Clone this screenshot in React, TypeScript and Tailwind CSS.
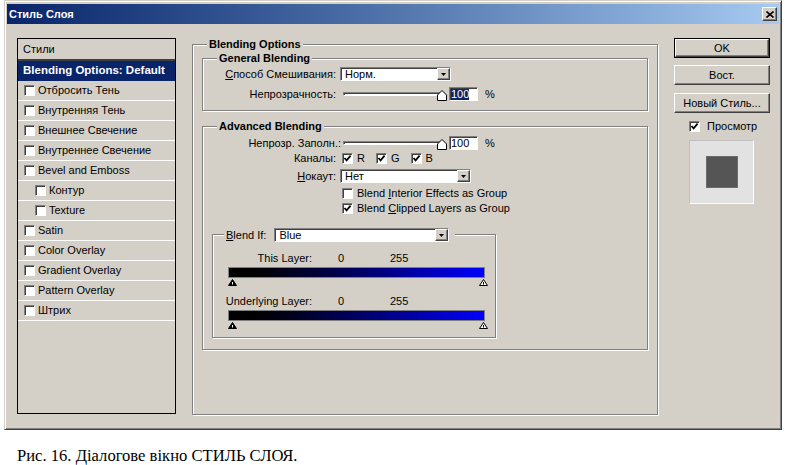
import React from "react";

const sunken =
  "border border-t-[#808080] border-l-[#808080] border-r-white border-b-white shadow-[inset_1px_1px_0_#404040]";
const raised =
  "border border-t-white border-l-white border-r-[#404040] border-b-[#404040] shadow-[inset_-1px_-1px_0_#808080]";
const etched = "border border-[#808080] shadow-[inset_1px_1px_0_#fff,1px_1px_0_#fff]";

const Check = ({ checked = false }: { checked?: boolean }) => (
  <span className={`inline-flex h-[11px] w-[11px] shrink-0 items-center justify-center bg-white ${sunken}`}>
    {checked && (
      <svg width="9" height="9" viewBox="0 0 9 9">
        <path d="M1.5 4 L3.6 6.4 L7.6 1.6" fill="none" stroke="#000" strokeWidth="1.7" />
      </svg>
    )}
  </span>
);

const Select = ({ value, className }: { value: string; className: string }) => (
  <div className={`flex h-[14px] items-stretch bg-white ${sunken} ${className}`}>
    <span className="flex-1 pl-[4px] leading-[12px]">{value}</span>
    <span className={`flex w-[13px] items-center justify-center bg-[#d4d0c8] ${raised}`}>
      <svg width="5" height="3" viewBox="0 0 5 3">
        <path d="M0 0H5L2.5 3Z" fill="#000" />
      </svg>
    </span>
  </div>
);

const Slider = () => (
  <div className="relative flex h-[14px] w-[102px] items-center">
    <div className={`h-[4px] w-full bg-white ${sunken}`} />
    <svg className="absolute right-[-2px] top-[3px]" width="10" height="11" viewBox="0 0 10 11">
      <path d="M5 0.5L9.5 5V10.5H0.5V5Z" fill="#fff" stroke="#000" />
    </svg>
  </div>
);

const Percent = ({ selected = false }: { selected?: boolean }) => (
  <div className="flex items-center gap-[7px]">
    <div className={`flex h-[14px] w-[29px] items-center bg-white pl-[1px] ${sunken}`}>
      <span className={selected ? "bg-[#0a246a] leading-[11px] text-white" : "leading-[11px]"}>100</span>
    </div>
    <span>%</span>
  </div>
);

const Marker = ({ filled }: { filled: boolean }) => (
  <svg width="9" height="7" viewBox="0 0 9 7">
    <path d="M4.5 0.5L8.5 6.5H0.5Z" fill={filled ? "#000" : "#fff"} stroke="#000" />
    <path d="M4.5 3V5.5" stroke={filled ? "#fff" : "#000"} />
  </svg>
);

const LevelBar = () => (
  <>
    <div className="ml-[15px] mt-[2px] h-[11px] w-[257px] border border-[#808080] bg-linear-to-r from-black to-[#0000ff]" />
    <div className="ml-[15px] mt-[1px] flex h-[7px] w-[260px] justify-between">
      <Marker filled />
      <Marker filled={false} />
    </div>
  </>
);

const Group = ({
  title,
  className,
  children,
}: {
  title: string;
  className: string;
  children: React.ReactNode;
}) => (
  <div className={`relative ${etched} ${className}`}>
    <span className="absolute left-[14px] top-[-8px] bg-[#d4d0c8] px-[2px] font-bold leading-[14px]">{title}</span>
    {children}
  </div>
);

const styles: { name: string; sub?: boolean }[] = [
  { name: "Отбросить Тень" },
  { name: "Внутренняя Тень" },
  { name: "Внешнее Свечение" },
  { name: "Внутреннее Свечение" },
  { name: "Bevel and Emboss" },
  { name: "Контур", sub: true },
  { name: "Texture", sub: true },
  { name: "Satin" },
  { name: "Color Overlay" },
  { name: "Gradient Overlay" },
  { name: "Pattern Overlay" },
  { name: "Штрих" },
];

export default function App() {
  return (
    <div className="h-[465px] w-[786px] overflow-hidden bg-white font-['Liberation_Sans',Arial,sans-serif] text-[11px] text-black">
      <div className="ml-[4px] flex h-[430px] w-[778px] flex-col border border-t-[#d4d0c8] border-l-[#d4d0c8] border-r-[#404040] border-b-[#404040] bg-[#d4d0c8] px-[2px] pt-[3px] shadow-[inset_1px_1px_0_#fff,inset_-1px_-1px_0_#808080]">
        {/* title bar */}
        <div className="flex h-[20px] items-center justify-between bg-linear-to-r from-[#0a246a] to-[#a6caf0] pl-[2px] pr-[2px]">
          <span className="font-bold text-white">Стиль Слоя</span>
          <span className={`flex h-[14px] w-[15px] items-center justify-center bg-[#d4d0c8] ${raised}`}>
            <svg width="8" height="7" viewBox="0 0 8 7">
              <path d="M0.5 0.5L7.5 6.5M7.5 0.5L0.5 6.5" stroke="#000" strokeWidth="1.6" />
            </svg>
          </span>
        </div>

        <div className="flex pl-[10px] pt-[14px]">
          {/* styles list */}
          <div className="flex h-[376px] w-[159px] flex-col border border-black">
            <div className="flex h-[20px] items-center pl-[5px]">Стили</div>
            <div className="h-[2px] bg-[#404040]" />
            <div className="flex h-[20px] items-center bg-[#0a246a] pl-[5px] text-[11.5px] font-bold text-white">
              Blending Options: Default
            </div>
            {styles.map((s) => (
              <div
                key={s.name}
                className={`flex h-[20px] items-center gap-[3px] border-b border-white ${s.sub ? "pl-[17px]" : "pl-[6px]"}`}
              >
                <Check />
                <span>{s.name}</span>
              </div>
            ))}
          </div>

          {/* blending options */}
          <Group title="Blending Options" className="ml-[16px] mt-[6px] h-[371px] w-[466px] px-[9px] pt-[13px]">
            <Group title="General Blending" className="h-[53px] w-[446px] pt-[8px]">
              <div className="flex h-[14px] items-center">
                <span className="w-[133px] text-right">
                  <u>С</u>пособ Смешивания:
                </span>
                <Select value="Норм." className="ml-[4px] w-[111px]" />
              </div>
              <div className="mt-[6px] flex h-[14px] items-center">
                <span className="w-[133px] text-right">Непрозрачность:</span>
                <div className="ml-[7px]">
                  <Slider />
                </div>
                <div className="ml-[4px]">
                  <Percent selected />
                </div>
              </div>
            </Group>

            <Group title="Advanced Blending" className="mt-[15px] h-[224px] w-[446px] pt-[9px]">
              <div className="flex h-[14px] items-center">
                <span className="w-[138px] text-right">Непрозр. Заполн.:</span>
                <div className="ml-[2px]">
                  <Slider />
                </div>
                <div className="ml-[4px]">
                  <Percent />
                </div>
              </div>
              <div className="mt-[1px] flex h-[14px] items-center">
                <span className="w-[133px] text-right">Каналы:</span>
                <div className="ml-[6px] flex items-center gap-[11px]">
                  {["R", "G", "B"].map((c) => (
                    <span key={c} className="flex items-center gap-[4px]">
                      <Check checked />
                      {c}
                    </span>
                  ))}
                </div>
              </div>
              <div className="mt-[4px] flex h-[14px] items-center">
                <span className="w-[133px] text-right">
                  <u>Н</u>окаут:
                </span>
                <Select value="Нет" className="ml-[4px] w-[131px]" />
              </div>
              <div className="ml-[139px] mt-[3px] flex h-[14px] items-center gap-[4px]">
                <Check />
                <span>
                  Blend <u>I</u>nterior Effects as Group
                </span>
              </div>
              <div className="ml-[139px] mt-[1px] flex h-[14px] items-center gap-[4px]">
                <Check checked />
                <span>
                  Blend <u>C</u>lipped Layers as Group
                </span>
              </div>

              <div className={`relative ml-[9px] mt-[19px] h-[104px] w-[284px] pt-[16px] ${etched}`}>
                <div className="absolute left-[11px] top-[-8px] flex items-center gap-[8px] bg-[#d4d0c8] px-[2px] pr-[6px]">
                  <span>
                    <u>B</u>lend If:
                  </span>
                  <Select value="Blue" className="w-[175px]" />
                </div>
                <div className="flex h-[14px] items-center">
                  <span className="w-[99px] text-right">This Layer:</span>
                  <span className="w-[78px] pl-[26px]">0</span>
                  <span>255</span>
                </div>
                <LevelBar />
                <div className="mt-[8px] flex h-[14px] items-center">
                  <span className="w-[99px] text-right">Underlying Layer:</span>
                  <span className="w-[78px] pl-[26px]">0</span>
                  <span>255</span>
                </div>
                <LevelBar />
              </div>
            </Group>
          </Group>

          {/* buttons */}
          <div className="ml-[16px] flex w-[96px] flex-col">
            <div className="h-[20px] border border-black">
              <div className={`flex h-full items-center justify-center ${raised}`}>OK</div>
            </div>
            <div className={`mt-[7px] flex h-[20px] items-center justify-center ${raised}`}>Вост.</div>
            <div className={`mt-[8px] flex h-[20px] items-center justify-center ${raised}`}>Новый Стиль...</div>
            <div className="mt-[6px] flex h-[14px] items-center gap-[7px] pl-[15px]">
              <Check checked />
              <span>Просмотр</span>
            </div>
            <div className="ml-[15px] mt-[7px] flex h-[64px] w-[65px] items-center justify-center border border-[#c0c0c0] border-r-white border-b-white bg-[#e2e2e2]">
              <div className="h-[32px] w-[32px] border border-[#6a6a6a] bg-[#555555]" />
            </div>
          </div>
        </div>
      </div>

      <p className="mt-[16px] pl-[17px] font-['Liberation_Serif','Times_New_Roman',serif] text-[16.6px] leading-[20px]">
        Рис. 16. Діалогове вікно СТИЛЬ СЛОЯ.
      </p>
    </div>
  );
}
